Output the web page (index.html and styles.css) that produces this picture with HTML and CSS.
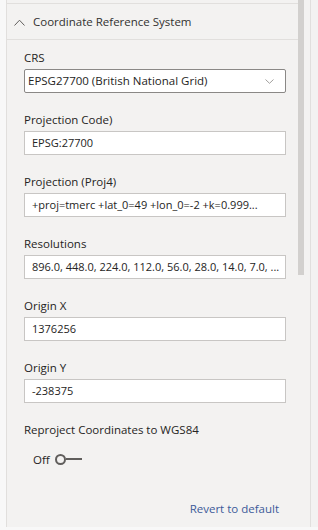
FILE: index.html
```html
<!DOCTYPE html>
<html lang="en">

<head>
  <meta name="viewport" content="width=device-width, initial-scale=1.0">
  <meta charset="utf-8">
  <title>Format pane</title>

  <link rel="stylesheet" href="styles.css">
</head>

<body>
  <div class="pane">
    <div class="gutter"></div>
    <div class="panel">
      <div class="panel-body">
        <div class="card-header">
          <svg class="chevron" width="11" height="7" viewBox="0 0 11 7">
            <polyline points="0.5,6.5 5.5,1.2 10.5,6.5" fill="none" stroke="#605e5c" stroke-width="1"/>
          </svg>
          <span class="card-title">Coordinate Reference System</span>
        </div>

        <div class="card-content">
          <div class="field">
            <div class="label">CRS</div>
            <div class="select">
              <span>EPSG27700 (British National Grid)</span>
              <svg width="9" height="5" viewBox="0 0 9 5">
                <polyline points="0.5,0.5 4.5,4.3 8.5,0.5" fill="none" stroke="#a19f9d" stroke-width="1"/>
              </svg>
            </div>
          </div>
          <div class="field">
            <div class="label">Projection Code)</div>
            <div class="input">EPSG:27700</div>
          </div>
          <div class="field">
            <div class="label">Projection (Proj4)</div>
            <div class="input">+proj=tmerc +lat_0=49 +lon_0=-2 +k=0.999...</div>
          </div>
          <div class="field">
            <div class="label">Resolutions</div>
            <div class="input">896.0, 448.0, 224.0, 112.0, 56.0, 28.0, 14.0, 7.0, ...</div>
          </div>
          <div class="field">
            <div class="label">Origin X</div>
            <div class="input">1376256</div>
          </div>
          <div class="field">
            <div class="label">Origin Y</div>
            <div class="input">-238375</div>
          </div>
          <div class="field">
            <div class="label">Reproject Coordinates to WGS84</div>
            <div class="toggle">
              <span>Off</span>
              <span class="toggle-knob"></span>
              <span class="toggle-line"></span>
            </div>
          </div>
          <div class="revert">Revert to default</div>
        </div>
      </div>
      <div class="scrollbar">
        <div class="thumb"></div>
      </div>
    </div>
    <div class="rest"></div>
  </div>
</body>

</html>
```

FILE: styles.css
```css
body {
  margin: 0;
  background: #f8f8f8;
  font-family: "Segoe UI", "Open Sans", "Liberation Sans", sans-serif;
  color: #252423;
}

.pane {
  display: flex;
  height: 527px;
}

.gutter {
  width: 6px;
  border-right: 1px solid #e1dfdd;
  background: #f8f8f8;
}

.panel {
  display: flex;
  width: 303px;
  background: #f3f2f1;
  border-right: 1px solid #e1dfdd;
}

.panel-body {
  width: 291px;
}

.card-header {
  display: flex;
  align-items: center;
  height: 35px;
  margin-top: 3px;
  border-top: 1px solid #e1dfdd;
  border-bottom: 1px solid #e1dfdd;
  padding-left: 7px;
}

.chevron {
  margin-right: 8px;
  margin-top: 1px;
}

.card-title {
  font-size: 11.5px;
  color: #323130;
}

.card-content {
  padding: 10px 12px 0 17px;
}

.field {
  margin-bottom: 19px;
}

.label {
  font-size: 11.5px;
  line-height: 16px;
  margin-bottom: 3px;
  color: #252423;
}

.input,
.select {
  box-sizing: border-box;
  height: 24px;
  line-height: 22px;
  font-size: 11px;
  background: #fff;
  border: 1px solid #c8c6c4;
  padding: 0 7px;
  white-space: nowrap;
  overflow: hidden;
}

.select {
  display: flex;
  align-items: center;
  justify-content: space-between;
  font-size: 11.5px;
  border-color: #8a8886;
  border-radius: 2px;
  padding: 0 11px 0 3px;
}

.toggle {
  display: flex;
  align-items: center;
  height: 20px;
  margin-top: 11px;
  padding-left: 9px;
  font-size: 11.5px;
}

.toggle-knob {
  width: 7px;
  height: 7px;
  border: 2px solid #605e5c;
  border-radius: 50%;
  margin-left: 5px;
}

.toggle-line {
  width: 16px;
  height: 2px;
  background: #605e5c;
}

.revert {
  text-align: right;
  font-size: 11.5px;
  color: #3c5a99;
  margin-top: 32px;
  padding-right: 7px;
}

.scrollbar {
  width: 6px;
  margin-right: 6px;
}

.thumb {
  height: 275px;
  background: #d2d0ce;
}

.rest {
  flex: 1;
  background: #f3f2f1;
}
```
